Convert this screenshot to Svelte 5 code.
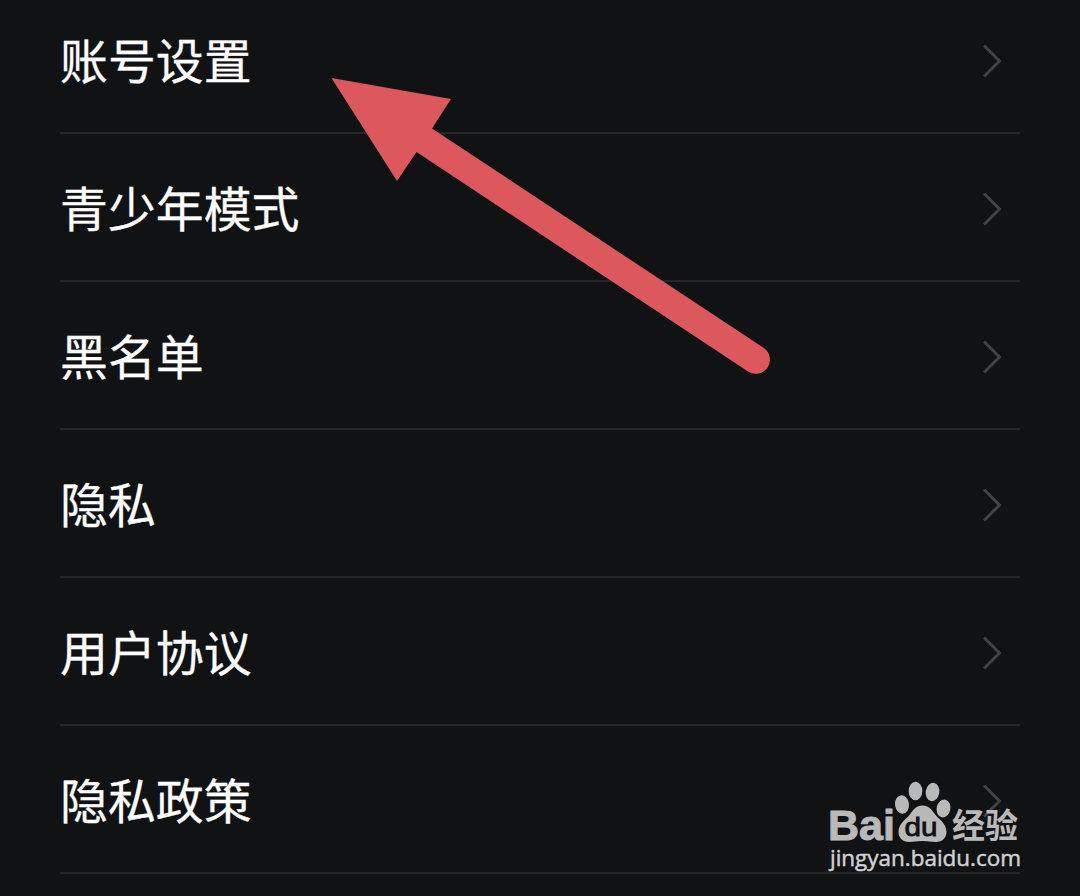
<script lang="ts">
	const items = ['账号设置', '青少年模式', '黑名单', '隐私', '用户协议', '隐私政策'];
</script>

<main class="screen">
	<ul class="settings">
		{#each items as item}
			<li class="row">
				<span class="label">{item}</span>
				<svg class="chevron" width="24" height="40" viewBox="0 0 24 40">
					<path d="M4 4.5 L19.5 20 L4 35.5" />
				</svg>
			</li>
		{/each}
	</ul>

	<svg class="arrow" width="1080" height="896" viewBox="0 0 1080 896">
		<path d="M331.5 78 L451 99 L432 128.5 L763.5 347.8 A14 14 0 0 1 748 371.5 L416.5 152 L397 181 Z" />
	</svg>

	<svg class="watermark" width="210" height="106" viewBox="820 770 210 106">
		<g class="logo">
			<text class="bai" x="828" y="840" textLength="67" lengthAdjust="spacingAndGlyphs">Bai</text>
			<ellipse cx="902" cy="804.5" rx="7" ry="9.2" transform="rotate(-8 902 804.5)" />
			<ellipse cx="915.5" cy="791" rx="6.8" ry="9.3" />
			<ellipse cx="932.5" cy="792" rx="6.8" ry="9.2" transform="rotate(10 932.5 792)" />
			<ellipse cx="943.5" cy="808.5" rx="6.9" ry="9" transform="rotate(12 943.5 808.5)" />
			<path
				d="M922.5 805.5 C930 805.5 932 811 936 815.5 C940 820 946.5 824 946.5 832 C946.5 838 942 842 936 842 C931 842 928 841 922.5 841 C917 841 914 842 909 842 C903 842 898.5 838 898.5 832 C898.5 824 905 820 909 815.5 C913 811 915 805.5 922.5 805.5 Z"
			/>
			<text class="du" x="904.5" y="835.5" textLength="33" lengthAdjust="spacingAndGlyphs">du</text>
			<text class="jingyan" x="952" y="838" textLength="66" lengthAdjust="spacingAndGlyphs">经验</text>
		</g>
		<text class="url" x="830" y="866" textLength="191" lengthAdjust="spacingAndGlyphs">jingyan.baidu.com</text>
	</svg>
</main>

<style>
	:global(body) {
		margin: 0;
		background: #111214;
	}
	.screen {
		position: relative;
		width: 1080px;
		height: 896px;
		overflow: hidden;
		background: #111214;
		font-family: 'Noto Sans CJK SC', sans-serif;
	}
	.settings {
		list-style: none;
		margin: -14px 60px 0;
		padding: 0;
	}
	.row {
		display: flex;
		align-items: center;
		justify-content: space-between;
		box-sizing: border-box;
		height: 148px;
		padding: 4px 16px 0 0;
		border-bottom: 2px solid #252628;
	}
	.label {
		padding-bottom: 6px;
		color: #fff;
		font-size: 47.9px;
		line-height: 72px;
		-webkit-text-stroke: 0.3px #fff;
	}
	.chevron path {
		fill: none;
		stroke: #414244;
		stroke-width: 3;
	}
	.arrow {
		position: absolute;
		top: 0;
		left: 0;
		fill: #dc585d;
	}
	.watermark {
		position: absolute;
		top: 770px;
		left: 820px;
	}
	.logo {
		fill: #b9b9ba;
	}
	.bai {
		font: bold 43px 'Liberation Sans', sans-serif;
		stroke: #b9b9ba;
		stroke-width: 1;
	}
	.du {
		font: 25px 'Liberation Sans', sans-serif;
		fill: #111214;
		stroke: #111214;
		stroke-width: 0.8;
	}
	.jingyan {
		font: bold 34px 'Noto Sans CJK SC', sans-serif;
	}
	.url {
		font: 22.5px 'Open Sans', sans-serif;
		fill: #d0d0d1;
		stroke: #d0d0d1;
		stroke-width: 0.5;
	}
</style>
